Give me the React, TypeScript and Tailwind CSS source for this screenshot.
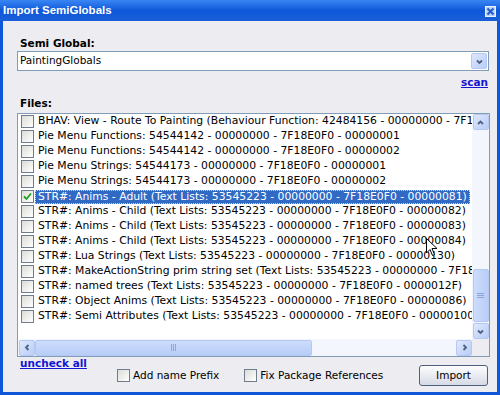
import React from "react";

const rows = [
  "BHAV: View - Route To Painting (Behaviour Function: 42484156 - 00000000 - 7F18E0F0 - 00001001)",
  "Pie Menu Functions: 54544142 - 00000000 - 7F18E0F0 - 00000001",
  "Pie Menu Functions: 54544142 - 00000000 - 7F18E0F0 - 00000002",
  "Pie Menu Strings: 54544173 - 00000000 - 7F18E0F0 - 00000001",
  "Pie Menu Strings: 54544173 - 00000000 - 7F18E0F0 - 00000002",
  "STR#: Anims - Adult (Text Lists: 53545223 - 00000000 - 7F18E0F0 - 00000081)",
  "STR#: Anims - Child (Text Lists: 53545223 - 00000000 - 7F18E0F0 - 00000082)",
  "STR#: Anims - Child (Text Lists: 53545223 - 00000000 - 7F18E0F0 - 00000083)",
  "STR#: Anims - Child (Text Lists: 53545223 - 00000000 - 7F18E0F0 - 00000084)",
  "STR#: Lua Strings (Text Lists: 53545223 - 00000000 - 7F18E0F0 - 00000130)",
  "STR#: MakeActionString prim string set (Text Lists: 53545223 - 00000000 - 7F18E0F0 - 00000087)",
  "STR#: named trees (Text Lists: 53545223 - 00000000 - 7F18E0F0 - 0000012F)",
  "STR#: Object Anims (Text Lists: 53545223 - 00000000 - 7F18E0F0 - 00000086)",
  "STR#: Semi Attributes (Text Lists: 53545223 - 00000000 - 7F18E0F0 - 00000100)",
];

function Chevron({ dir }: { dir: "up" | "down" | "left" | "right" }) {
  const d = {
    up: "M2 6 L4.5 3.5 L7 6",
    down: "M2 3.5 L4.5 6 L7 3.5",
    left: "M5.5 2 L3 4.5 L5.5 7",
    right: "M3.5 2 L6 4.5 L3.5 7",
  }[dir];
  return (
    <svg width="9" height="9" viewBox="0 0 9 9">
      <path d={d} fill="none" stroke="#4d6185" strokeWidth="1.8" />
    </svg>
  );
}

function ArrowBtn({ dir }: { dir: "up" | "down" | "left" | "right" }) {
  return (
    <div className="w-[16px] h-[16px] shrink-0 rounded-[2px] border border-[#b4c8f2] bg-gradient-to-br from-[#dfe8fd] to-[#b9cdf7] flex items-center justify-center">
      <Chevron dir={dir} />
    </div>
  );
}

function Check({ checked }: { checked?: boolean }) {
  return (
    <div className="w-[13px] h-[13px] shrink-0 border border-[#6f7c8e] bg-gradient-to-br from-[#dcdcd8] to-white flex items-center justify-center">
      {checked && (
        <svg width="9" height="9" viewBox="0 0 9 9">
          <path d="M1 4.5 L3.5 7 L8 1.5" fill="none" stroke="#21a121" strokeWidth="1.8" />
        </svg>
      )}
    </div>
  );
}

export default function App() {
  return (
    <div className="relative w-[500px] h-[395px] bg-[#0f57d8] flex flex-col font-['DejaVu_Sans',Verdana,sans-serif] text-[10.5px] text-black overflow-hidden">
      {/* title bar */}
      <div className="h-[21px] shrink-0 flex items-center justify-between pl-[3px] pr-[4px] bg-gradient-to-b from-[#3a86f4] via-[#0d57d9] to-[#1a5fd8]">
        <span className="font-['Liberation_Sans',Arial,sans-serif] font-bold text-[11.5px] text-white">Import SemiGlobals</span>
        <div className="w-[11px] h-[11px] mt-[2px] bg-[#c3d2ee] border border-white/70 flex items-center justify-center">
          <svg width="9" height="9" viewBox="0 0 9 9">
            <path d="M1.5 1.5 L7.5 7.5 M7.5 1.5 L1.5 7.5" stroke="#1f5ad0" strokeWidth="2" />
          </svg>
        </div>
      </div>

      {/* body */}
      <div className="flex-1 mx-[3px] mb-[3px] bg-[#edecf1] pl-[14px] pr-[7px] pt-[15px] flex flex-col">
        <div className="h-[14px] leading-[14px] pl-[3px] font-bold">Semi Global:</div>

        <div className="mt-[1px] h-[20px] w-[472px] border border-[#7f9db9] bg-white flex items-center">
          <span className="flex-1 pl-[2px]">PaintingGlobals</span>
          <div className="mr-[1px]">
            <ArrowBtn dir="down" />
          </div>
        </div>

        <div className="mt-[4px] h-[14px] leading-[14px] text-right pr-[2px]">
          <span className="font-bold text-[#1414d2] underline">scan</span>
        </div>

        <div className="mt-[7px] h-[14px] leading-[14px] pl-[3px] font-bold">Files:</div>

        {/* list box */}
        <div className="mt-[3px] h-[244px] w-[473px] border border-[#7f9db9] bg-white flex flex-col">
          <div className="h-[225px] flex">
            <div className="flex-1 overflow-hidden whitespace-nowrap text-[10.8px]">
              {rows.map((r, i) => (
                <div key={i} className="h-[15px] flex items-center pl-[3px]">
                  <Check checked={i === 5} />
                  {i === 5 ? (
                    <span className="ml-[1px] h-[14px] leading-[12px] px-[2px] bg-[#316ac5] text-white border border-dotted border-[#e4d98a]">
                      {r}
                    </span>
                  ) : (
                    <span className="ml-[4px]">{r}</span>
                  )}
                </div>
              ))}
            </div>
            <div className="w-[17px] shrink-0 bg-[#f3f6fd] flex flex-col items-center">
              <ArrowBtn dir="up" />
              <div className="flex-1 w-full flex flex-col">
                <div className="h-[139px]" />
                <div className="h-[53px] mx-[0.5px] rounded-[2px] border border-[#b4c8f2] bg-gradient-to-r from-[#cddcfc] to-[#b8cdf7] flex items-center justify-center">
                  <svg width="7" height="7" viewBox="0 0 7 7">
                    <path d="M0 1.5 H7 M0 3.5 H7 M0 5.5 H7" stroke="#8aa4dc" strokeWidth="1" />
                  </svg>
                </div>
                <div className="flex-1" />
              </div>
              <ArrowBtn dir="down" />
            </div>
          </div>
          <div className="h-[17px] flex">
            <div className="flex-1 bg-[#f3f6fd] flex items-center pl-[1px]">
              <ArrowBtn dir="left" />
              <div className="w-[277px] h-[16px] rounded-[2px] border border-[#b4c8f2] bg-gradient-to-b from-[#cddcfc] to-[#b8cdf7] flex items-center justify-center">
                <svg width="7" height="7" viewBox="0 0 7 7">
                  <path d="M1.5 0 V7 M3.5 0 V7 M5.5 0 V7" stroke="#8aa4dc" strokeWidth="1" />
                </svg>
              </div>
              <div className="flex-1" />
              <ArrowBtn dir="right" />
            </div>
            <div className="w-[17px] bg-[#edecf1]" />
          </div>
        </div>

        {/* bottom row */}
        <div className="flex items-start">
          <div className="w-[100px] shrink-0 pl-[3px] h-[12px] leading-[12px]">
            <span className="font-bold text-[#1414d2] underline">uncheck all</span>
          </div>
          <div className="mt-[8px] h-[21px] flex-1 flex items-center">
            <Check />
            <span className="ml-[3px]">Add name Prefix</span>
            <div className="ml-[25px]">
              <Check />
            </div>
            <span className="ml-[3px]">Fix Package References</span>
            <div className="ml-auto mr-[2px] w-[69px] h-[21px] rounded-[3px] border border-[#4f5f7e] bg-gradient-to-b from-[#fdfdfe] to-[#d6dae6] flex items-center justify-center">
              Import
            </div>
          </div>
        </div>
      </div>

      {/* mouse cursor */}
      <svg className="absolute left-[426px] top-[238px]" width="12" height="19" viewBox="0 0 12 19">
        <path d="M0.5 0.5 L0.5 15 L4 11.5 L6.5 17.5 L8.5 16.5 L6 10.5 L11 10.5 Z" fill="white" stroke="black" strokeWidth="1" />
      </svg>
    </div>
  );
}
